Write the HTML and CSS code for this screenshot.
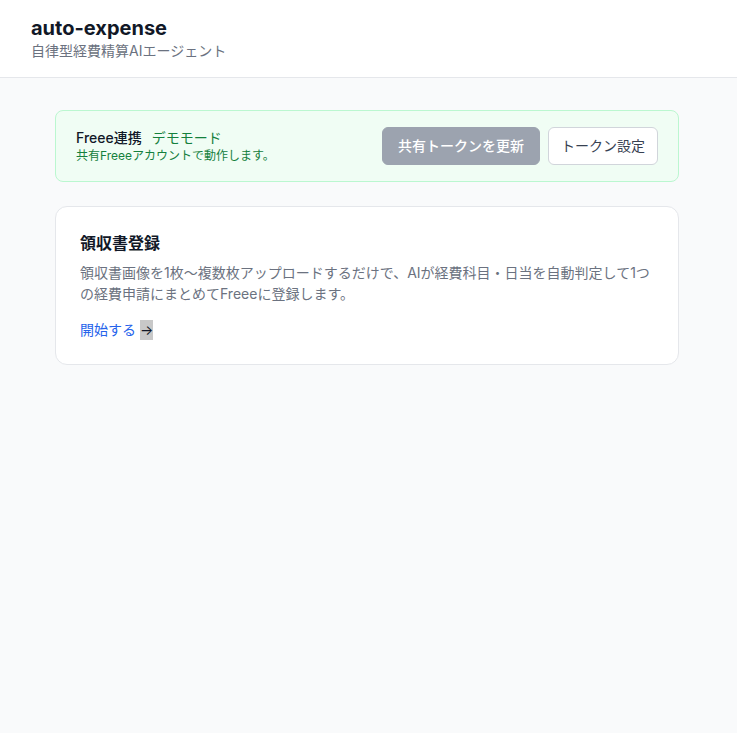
FILE: index.html
```html
<!DOCTYPE html>
<html lang="ja">
<head>
    <meta charset="UTF-8">
    <meta name="viewport" content="width=device-width, initial-scale=1.0">
    <title>auto-expense</title>
    <link rel="stylesheet" href="styles.css">
</head>
<body>
    <!-- ヘッダー -->
    <header class="header">
        <h1 class="header-title">auto-expense</h1>
        <p class="header-sub">自律型経費精算AIエージェント</p>
    </header>

    <main class="main">
        <!-- Freee連携バナー -->
        <div class="freee-banner">
            <div class="freee-info">
                <div class="freee-line">
                    <span class="freee-name">Freee連携</span>
                    <span class="freee-mode">デモモード</span>
                </div>
                <p class="freee-note">共有Freeeアカウントで動作します。</p>
            </div>
            <div class="freee-actions">
                <button class="btn btn-muted" disabled>共有トークンを更新</button>
                <button class="btn btn-outline">トークン設定</button>
            </div>
        </div>

        <!-- 領収書登録カード -->
        <div class="card">
            <h2 class="card-title">領収書登録</h2>
            <p class="card-text">領収書画像を1枚〜複数枚アップロードするだけで、AIが経費科目・日当を自動判定して1つの経費申請にまとめてFreeeに登録します。</p>
            <a class="card-link" href="#">開始する <span class="arrow">→</span></a>
        </div>
    </main>
</body>
</html>
```

FILE: styles.css
```css
* {
    box-sizing: border-box;
    margin: 0;
    padding: 0;
}

body {
    font-family: Inter, 'Noto Sans CJK JP', sans-serif;
    background-color: #f9fafb;
    color: #111827;
    min-height: 100vh;
}

.header {
    background-color: #fff;
    border-bottom: 1px solid #e5e7eb;
    padding: 16px 31px;
}

.header-title {
    font-size: 20px;
    line-height: 24px;
    font-weight: 700;
    color: #111827;
}

.header-sub {
    margin-top: 1px;
    font-size: 14px;
    line-height: 20px;
    color: #6b7280;
}

.main {
    padding: 32px 58px 32px 55px;
    display: flex;
    flex-direction: column;
    gap: 24px;
}

.freee-banner {
    display: flex;
    align-items: center;
    justify-content: space-between;
    background-color: #f0fdf4;
    border: 1px solid #bbf7d0;
    border-radius: 8px;
    padding: 16px 20px;
}

.freee-line {
    font-size: 14px;
    line-height: 20px;
}

.freee-name {
    font-weight: 500;
    color: #111827;
}

.freee-mode {
    margin-left: 6px;
    color: #15803d;
}

.freee-note {
    font-size: 12px;
    line-height: 16px;
    color: #15803d;
}

.freee-actions {
    display: flex;
    gap: 8px;
}

.btn {
    font-family: inherit;
    font-size: 14px;
    line-height: 20px;
    padding: 8px 12px;
    border-radius: 6px;
    border: 1px solid #d1d5db;
    background-color: #fff;
    color: #374151;
    cursor: pointer;
}

.btn-muted {
    padding: 8px 15px;
    background-color: #9ca3af;
    border-color: #9ca3af;
    color: #fff;
    font-weight: 500;
    cursor: default;
}

.card {
    background-color: #fff;
    border: 1px solid #e5e7eb;
    border-radius: 12px;
    padding: 24px;
}

.card-title {
    font-size: 16px;
    line-height: 24px;
    font-weight: 700;
    color: #111827;
}

.card-text {
    margin-top: 7px;
    font-size: 14px;
    line-height: 21px;
    color: #6b7280;
}

.card-link {
    display: inline-block;
    margin-top: 16px;
    font-size: 14px;
    line-height: 20px;
    color: #2563eb;
    text-decoration: none;
}

.arrow {
    display: inline-block;
    background-color: #c8c8c8;
    color: #111827;
}
```
